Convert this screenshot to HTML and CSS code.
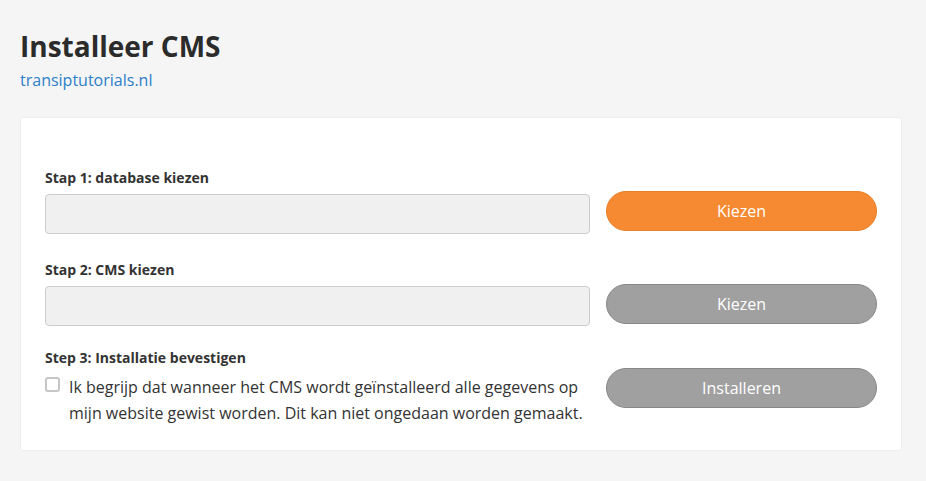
FILE: index.html
```html
<!DOCTYPE html>
<html lang="nl">
<head>
    <meta charset="UTF-8">
    <meta name="viewport" content="width=device-width, initial-scale=1.0">
    <title>Installeer CMS</title>
    <link rel="stylesheet" href="styles.css">
</head>
<body>
    <div class="page">
        <h1>Installeer CMS</h1>
        <a class="site-link" href="#">transiptutorials.nl</a>

        <div class="card">
            <div class="step step-1">
                <div class="step-field">
                    <label for="database">Stap 1: database kiezen</label>
                    <input type="text" id="database" class="field" disabled>
                </div>
                <button class="btn btn-primary">Kiezen</button>
            </div>

            <div class="step step-2">
                <div class="step-field">
                    <label for="cms">Stap 2: CMS kiezen</label>
                    <input type="text" id="cms" class="field" disabled>
                </div>
                <button class="btn btn-disabled">Kiezen</button>
            </div>

            <div class="step step-3">
                <div class="step-field">
                    <label>Step 3: Installatie bevestigen</label>
                    <div class="confirm">
                        <span class="checkbox"></span>
                        <p>Ik begrijp dat wanneer het CMS wordt geïnstalleerd alle gegevens op mijn website gewist worden. Dit kan niet ongedaan worden gemaakt.</p>
                    </div>
                </div>
                <button class="btn btn-disabled btn-install">Installeren</button>
            </div>
        </div>
    </div>
</body>
</html>
```

FILE: styles.css
```css
body {
    font-family: 'Open Sans', sans-serif;
    margin: 0;
    padding: 0;
    background: #f5f5f5;
    color: #333;
}

.page {
    padding: 24px 24px 30px 20px;
}

h1 {
    font-size: 28px;
    font-weight: 700;
    color: #2b2b2b;
    margin: 0;
    line-height: 44px;
}

.site-link {
    display: block;
    font-size: 16px;
    color: #2d7fc8;
    text-decoration: none;
    line-height: 24px;
    margin-top: 0;
}

.card {
    margin-top: 25px;
    background: #fff;
    border: 1px solid #eee;
    border-radius: 3px;
    padding: 51px 24px 24px 24px;
}

.step {
    display: grid;
    grid-template-columns: 545px 1fr;
    column-gap: 16px;
    align-items: end;
}

.step-2 {
    margin-top: 27px;
}

.step-3 {
    margin-top: 23px;
    align-items: start;
}

label {
    display: block;
    font-size: 14px;
    font-weight: 700;
    color: #333;
    line-height: 18px;
    margin-bottom: 7px;
}

.field {
    display: block;
    width: 100%;
    height: 40px;
    box-sizing: border-box;
    background: #f0f0f0;
    border: 1px solid #ccc;
    border-radius: 4px;
    margin: 0;
}

.btn {
    height: 40px;
    border-radius: 20px;
    font-family: 'Open Sans', sans-serif;
    font-size: 16px;
    color: #fff;
    cursor: pointer;
    padding: 0;
}

.step-1 .btn {
    margin-bottom: 3px;
}

.step-2 .btn {
    margin-bottom: 2px;
}

.btn-primary {
    background: #f68a32;
    border: 1px solid #e97f27;
}

.btn-disabled {
    background: #a0a0a0;
    border: 1px solid #888;
}

.btn-install {
    margin-top: 19px;
}

.confirm {
    display: flex;
    align-items: flex-start;
    gap: 9px;
}

.checkbox {
    flex: none;
    width: 15px;
    height: 15px;
    box-sizing: border-box;
    border: 2px solid #c6c6c6;
    border-radius: 3px;
    background: #fff;
    margin-top: 3px;
}

.confirm p {
    margin: 0;
    font-size: 16px;
    line-height: 26px;
    color: #333;
}
```
